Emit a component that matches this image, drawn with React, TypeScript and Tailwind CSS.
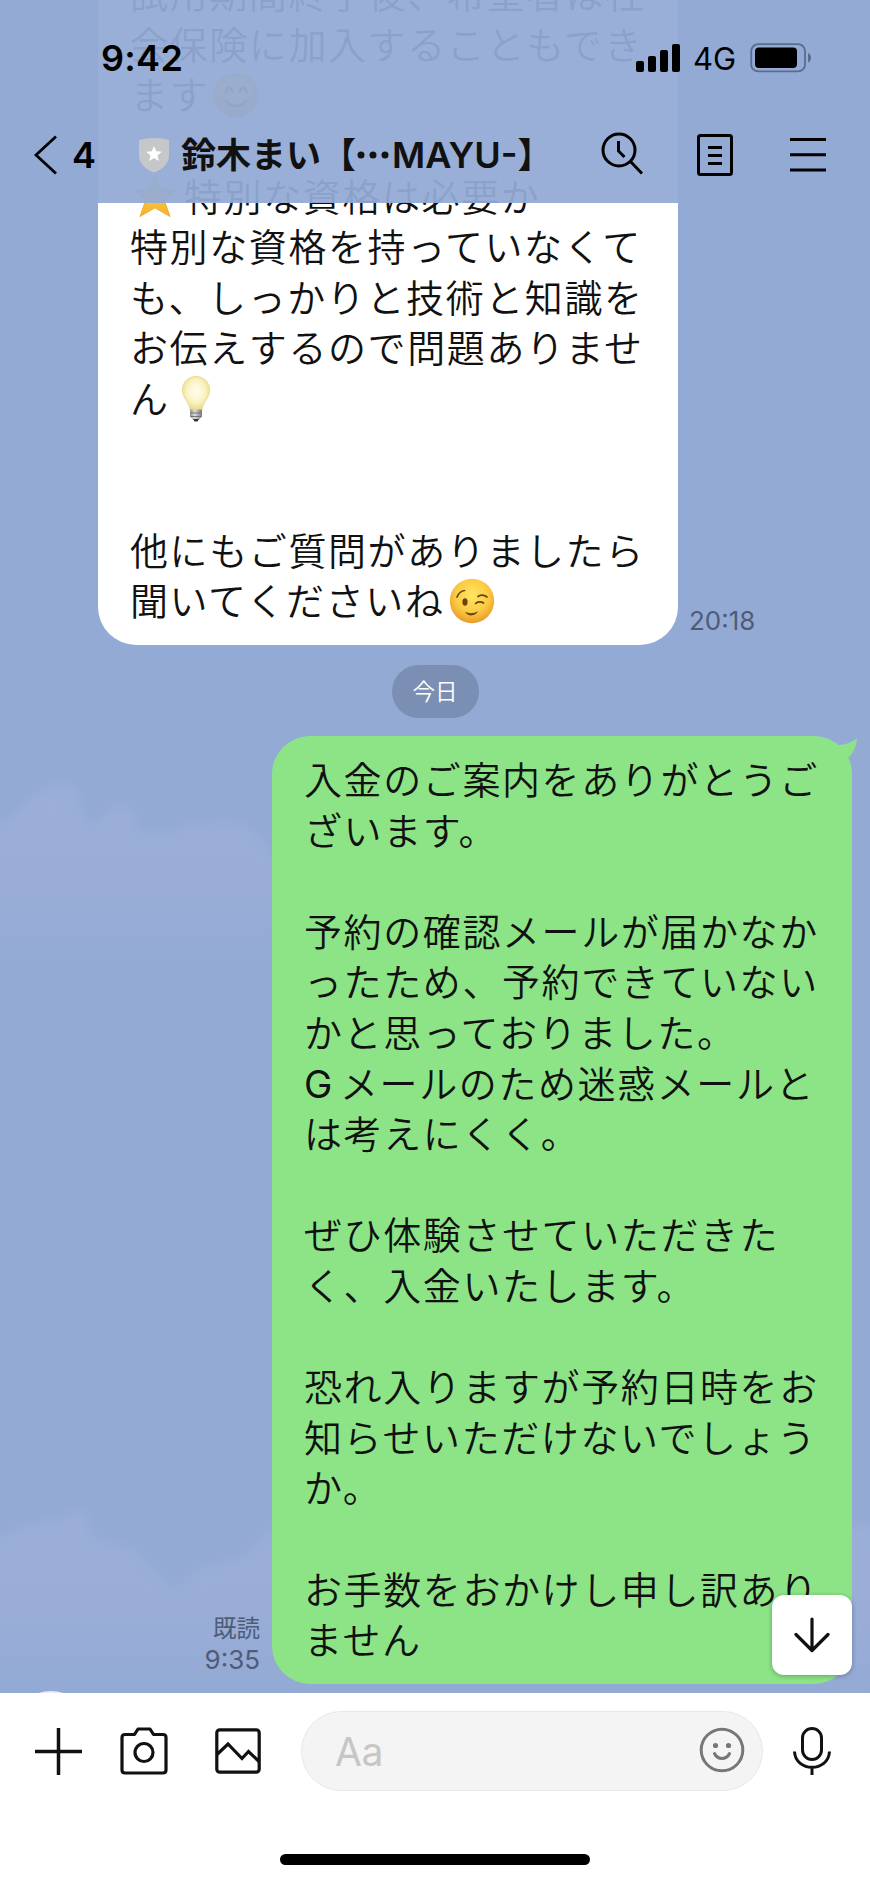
import type { ReactNode } from 'react';

const FONT = "font-['Inter','Noto_Sans_CJK_JP',sans-serif]";

function StarEmoji() {
  return (
    <svg viewBox="0 0 46 46" className="ml-[2px] inline-block h-[46px] w-[46px] -mt-2 align-middle">
      <defs>
        <linearGradient id="star" x1="0" y1="0" x2="0" y2="1">
          <stop offset="0" stopColor="#fbdc4c" />
          <stop offset="1" stopColor="#f5b22c" />
        </linearGradient>
      </defs>
      <path
        d="M23 2l5.6 14.2 15.3 1-11.8 9.6L38 43.5 23 34.8 8 43.5l5.9-16.7L2.1 17.2l15.3-1z"
        fill="url(#star)"
        stroke="#f0ad2b"
        strokeWidth="1"
        strokeLinejoin="round"
      />
    </svg>
  );
}

function BulbEmoji() {
  return (
    <svg viewBox="0 0 46 48" className="ml-[3px] inline-block h-[48px] w-[46px] -mt-[7px] align-middle">
      <defs>
        <radialGradient id="bulb" cx="0.5" cy="0.45" r="0.55">
          <stop offset="0" stopColor="#fffef2" />
          <stop offset="0.6" stopColor="#fbf3c4" />
          <stop offset="1" stopColor="#ecdc8c" />
        </radialGradient>
        <linearGradient id="cap" x1="0" y1="0" x2="1" y2="0">
          <stop offset="0" stopColor="#8f8f8f" />
          <stop offset="0.4" stopColor="#dedede" />
          <stop offset="1" stopColor="#777777" />
        </linearGradient>
      </defs>
      <path
        d="M23 1.5c8 0 13.6 6 13.6 13.4 0 8-6.3 11-7.6 19.6H17C15.700 25.900 9.400 22.900 9.400 14.900 9.400 7.500 15 1.500 23 1.500z"
        fill="url(#bulb)"
        stroke="#e6d68c"
        strokeWidth="0.8"
      />
      <path d="M17 34.500h12v7l-3 3h-6l-3-3z" fill="url(#cap)" />
      <path d="M17 38h12M17.500 41.500h11" stroke="#777" strokeWidth="1" />
      <path d="M20 44h6l-1.500 2.500h-3z" fill="#333" />
    </svg>
  );
}

function FaceEmoji({ children }: { children: ReactNode }) {
  return (
    <svg viewBox="0 0 46 46" className="ml-[4px] inline-block h-[46px] w-[46px] -mt-[8px] align-middle">
      <defs>
        <radialGradient id="face" cx="0.5" cy="0.38" r="0.62">
          <stop offset="0" stopColor="#ffe765" />
          <stop offset="0.6" stopColor="#fbcb43" />
          <stop offset="1" stopColor="#ea9a2a" />
        </radialGradient>
      </defs>
      <circle cx="23" cy="23" r="22.200" fill="url(#face)" />
      {children}
    </svg>
  );
}

function WinkEmoji() {
  return (
    <FaceEmoji>
      <ellipse cx="16" cy="24" rx="2.600" ry="3.700" fill="#6b4210" />
      <g fill="none" stroke="#6b4210" strokeWidth="1.700" strokeLinecap="round">
        <path d="M8 19c1.500-3.500 4-6 7.500-6.500M29 18.500c3-1.800 6.500-1.500 9 .5M26.500 25.500c2-2 6-2 8-.5" />
      </g>
      <path d="M16 33.500c4 2.300 9 2.300 13-.5-2 5.500-10.500 6-13 .5z" fill="#6b4210" />
    </FaceEmoji>
  );
}

function SmileEmoji() {
  return (
    <FaceEmoji>
      <g fill="none" stroke="#6b4210" strokeWidth="2.200" strokeLinecap="round">
        <path d="M13 20c1-6 5-6 6.500 0M27 20c1-6 5-6 6.500 0M13 29c5 6.500 15 6.500 20 0" />
      </g>
    </FaceEmoji>
  );
}

const received: ReactNode[] = [
  '試用期間終了後、希望者は社',
  '会保険に加入することもでき',
  <>ます<SmileEmoji /></>,
  '',
  <><StarEmoji /><span className="ml-[6px]">特別な資格は必要か</span></>,
  '特別な資格を持っていなくて',
  'も、しっかりと技術と知識を',
  'お伝えするので問題ありませ',
  <>ん<BulbEmoji /></>,
  '',
  '',
  '他にもご質問がありましたら',
  <>聞いてくださいね<WinkEmoji /></>
];

const sent: ReactNode[] = [
  '入金のご案内をありがとうご',
  'ざいます。',
  '',
  '予約の確認メールが届かなか',
  'ったため、予約できていない',
  'かと思っておりました。',
  <><span className="mr-[6px] font-normal">G</span>メールのため迷惑メールと</>,
  'は考えにくく。',
  '',
  'ぜひ体験させていただきた',
  'く、入金いたします。',
  '',
  '恐れ入りますが予約日時をお',
  '知らせいただけないでしょう',
  'か。',
  '',
  'お手数をおかけし申し訳あり',
  'ません'
];

function Lines({ lines }: { lines: ReactNode[] }) {
  return (
    <>
      {lines.map((line, i) => (
        <p key={i} className="h-[50.6px] whitespace-nowrap text-[38px] font-[350] leading-[50.6px] tracking-[1.6px] text-[#111]">
          {line}
        </p>
      ))}
    </>
  );
}

function Clouds() {
  return (
    <svg viewBox="0 0 870 1693" className="absolute inset-0 h-full w-full">
      <defs>
        <filter id="soft">
          <feGaussianBlur stdDeviation="7" />
        </filter>
        <linearGradient id="cloud" x1="0" y1="0" x2="0" y2="1">
          <stop offset="0" stopColor="#9bafd9" />
          <stop offset="0.5" stopColor="#9aadd7" />
          <stop offset="1" stopColor="#93aad4" />
        </linearGradient>
      </defs>
      <g fill="url(#cloud)" filter="url(#soft)">
        <path d="M-20 825l30-5 20-22 30-16 16 6 6 32 16 6 12-21 22 2 6 26 32 2 16-12 56-1 26 24 20 40v80H-20z" />
        <path d="M-20 1545l48-20 36-4 10-12 12 4 4 26 40 8 26 26 18 20 26-26 40-8 30-30 40 10v145H-20z" />
        <path d="M820 1540l60-20v180h-60z" />
      </g>
    </svg>
  );
}

function Header() {
  return (
    <header className="absolute inset-x-0 top-0 z-10 h-[203px] bg-[#93aad4]/94 text-black">
      <div className="flex h-[116px] items-center pl-[101px] pr-[56px]">
        <span className="text-[36px] font-semibold leading-none tracking-[0.3px]">9:42</span>
        <svg viewBox="0 0 44 28" className="ml-auto h-7 w-11">
          <rect x="0" y="17" width="8" height="11" rx="2" />
          <rect x="12" y="12" width="8" height="16" rx="2" />
          <rect x="24" y="6" width="8" height="22" rx="2" />
          <rect x="36" y="0" width="8" height="28" rx="2" />
        </svg>
        <span className="ml-[13px] w-[57px] text-[31px] leading-none tracking-[-0.1px]">4G</span>
        <svg viewBox="0 0 64 30" className="h-[30px] w-16">
          <rect x="1.200" y="1.200" width="53.800" height="27.200" rx="7" fill="none" stroke="#5c6c8c" strokeWidth="1.800" />
          <rect x="5" y="4.500" width="42" height="20.500" rx="4" />
          <path d="M58 10c4 1.500 4 8 0 9.500z" fill="#5c6c8c" />
        </svg>
      </div>
      <div className="flex h-[78px] items-center pl-[33px]">
        <svg viewBox="0 0 25 40" className="h-10 w-[25px]" fill="none" stroke="#000" strokeWidth="2.800">
          <path d="M23 1.500L3 20l20 18.500" />
        </svg>
        <span className="ml-[14px] text-[36px] font-semibold leading-none">4</span>
        <svg viewBox="0 0 32 36" className="ml-[42px] h-9 w-8">
          <path d="M1 3Q16-1 31 3v15Q31 30 16 35.500 1 30 1 18z" fill="#c6c7c8" />
          <path d="M16 9l2.200 5.300 5.600.4-4.300 3.700 1.300 5.500L16 21l-4.800 2.900 1.300-5.500-4.300-3.700 5.600-.4z" fill="#fff" />
        </svg>
        <h1 className="ml-[11px] flex w-[420px] items-center whitespace-nowrap text-[35px] font-bold leading-none text-[#111]">
          鈴木まい【
          <svg viewBox="0 0 36 10" className="h-[10px] w-9" fill="#111">
            <circle cx="5" cy="5" r="3.500" />
            <circle cx="17" cy="5" r="3.500" />
            <circle cx="29" cy="5" r="3.500" />
          </svg>
          <span className="text-[36px] font-semibold">MAYU-</span>】
        </h1>
        <svg viewBox="0 0 42 43" className="-mt-[3px] h-[43px] w-[42px] shrink-0" fill="none" stroke="#000" strokeWidth="3">
          <circle cx="18" cy="18" r="16" />
          <path d="M17.500 9v10l6 6M29.500 29.500L41 41.500" />
        </svg>
        <svg viewBox="0 0 36 42" className="ml-[54px] h-[42px] w-9 shrink-0" fill="none" stroke="#000" strokeWidth="3">
          <rect x="1.500" y="1.500" width="33" height="39" rx="2" />
          <path d="M11 13.500h14M11 21.500h14M11 29.500h14" />
        </svg>
        <svg viewBox="0 0 36 36" className="ml-[57px] h-9 w-9 shrink-0" stroke="#000" strokeWidth="3">
          <path d="M0 2.500h36M0 17.800h36M0 33h36" />
        </svg>
      </div>
    </header>
  );
}

function InputBar() {
  return (
    <footer className="flex h-[190px] flex-col bg-white">
      <div className="mt-[18px] flex h-20 items-center pl-[35px]">
        <svg viewBox="0 0 47 47" className="h-[47px] w-[47px]" stroke="#111" strokeWidth="3.500">
          <path d="M0 23.500h47M23.500 0v47" />
        </svg>
        <svg viewBox="0 0 48 48" className="ml-[38px] h-12 w-12" fill="none" stroke="#111" strokeWidth="3.200">
          <path d="M5 7.500h9.500L18 2h12l3.500 5.500H43q3 0 3 3V43q0 3-3 3H5q-3 0-3-3V10.500q0-3 3-3z" strokeLinejoin="round" />
          <circle cx="24" cy="25.500" r="9" />
        </svg>
        <svg viewBox="0 0 46 46" className="ml-[47px] h-[46px] w-[46px]" fill="none" stroke="#111" strokeWidth="3.200">
          <rect x="1.800" y="1.800" width="42.400" height="42.400" rx="3" />
          <path d="M2 26.500L13 16l14 14.500 6.500-7L44 33.500" />
        </svg>
        <div className="ml-10 flex h-20 w-[462px] items-center justify-between rounded-full border border-[#e8e8e8] bg-[#f4f4f4] pl-[33px] pr-[17px]">
          <span className="text-[39px] leading-none tracking-[-0.5px] text-[#c6c6c6]">Aa</span>
          <svg viewBox="0 0 46 46" className="-mt-[2px] h-[46px] w-[46px]" fill="none" stroke="#777" strokeWidth="3">
            <circle cx="23" cy="23" r="20.800" />
            <circle cx="16.500" cy="18.500" r="2.600" fill="#777" stroke="none" />
            <circle cx="29.500" cy="18.500" r="2.600" fill="#777" stroke="none" />
            <path d="M15.500 26.500c3 6.500 12 6.500 15 0" strokeLinecap="round" />
          </svg>
        </div>
        <svg viewBox="0 0 38 48" className="ml-[30px] h-12 w-[38px]" fill="none" stroke="#111" strokeWidth="3">
          <rect x="9.500" y="1.500" width="19" height="31" rx="9.500" />
          <path d="M1.500 24.500c1 21 34 21 35 0M19 40v8" />
        </svg>
      </div>
      <div className="mx-auto mt-[63px] h-[11px] w-[310px] rounded-full bg-black" />
    </footer>
  );
}

export default function App() {
  return (
    <div className={`${FONT} flex h-[1883px] w-[870px] flex-col overflow-hidden bg-white`} lang="ja">
      <main className="relative flex h-[1693px] flex-col justify-end overflow-hidden bg-[#93aad4]">
        <Clouds />
        <Header />

        <div className="relative flex shrink-0 items-end pl-[98px]">
          <div className="w-[580px] rounded-b-[38px] bg-white pb-[18px] pl-8">
            <Lines lines={received} />
          </div>
          <time className="mb-[10px] ml-[11px] text-[26px] leading-7 text-[#4e5c78]">20:18</time>
        </div>

        <div className="relative mx-auto mt-5 flex h-[53px] w-[87px] shrink-0 items-center justify-center rounded-full bg-[#7b8fb4] text-[22.500px] font-[350] text-white">
          今日
        </div>

        <div className="relative mb-[9px] mt-[18px] flex shrink-0 items-end justify-end pr-[18px]">
          <div className="mb-[9px] mr-3 text-right text-[#4e5c78]">
            <p className="text-[23.500px] leading-[31px]">既読</p>
            <p className="text-[26px] leading-[31px]">9:35</p>
          </div>
          <div className="relative h-[948px] w-[580px] rounded-[38px] bg-[#8de486] pl-8 pt-[19px]">
            <Lines lines={sent} />
            {/* bubble tail */}
            <svg viewBox="0 0 40 40" className="absolute -right-[6px] top-0 h-10 w-10">
              <path d="M20.500 9C28 9 34 6 39 2.500 38 12 35 17 30 22L18 26z" fill="#8de486" />
            </svg>
          </div>
          <button
            type="button"
            aria-label="Scroll to latest"
            className="absolute bottom-[9px] right-[18px] grid h-20 w-20 place-items-center rounded-xl bg-white shadow-[0_1px_5px_rgba(0,0,0,0.3)]"
          >
            <svg viewBox="0 0 36 36" className="h-9 w-9" fill="none" stroke="#111" strokeWidth="3.200" strokeLinecap="round" strokeLinejoin="round">
              <path d="M18 2v31M2 17.500L18 33.500l16-16" />
            </svg>
          </button>
        </div>

        {/* top edge of the next sender's avatar */}
        <div className="absolute -bottom-[78px] left-[11px] h-20 w-20 rounded-full bg-[#eceaf2]" />
      </main>
      <InputBar />
    </div>
  );
}
